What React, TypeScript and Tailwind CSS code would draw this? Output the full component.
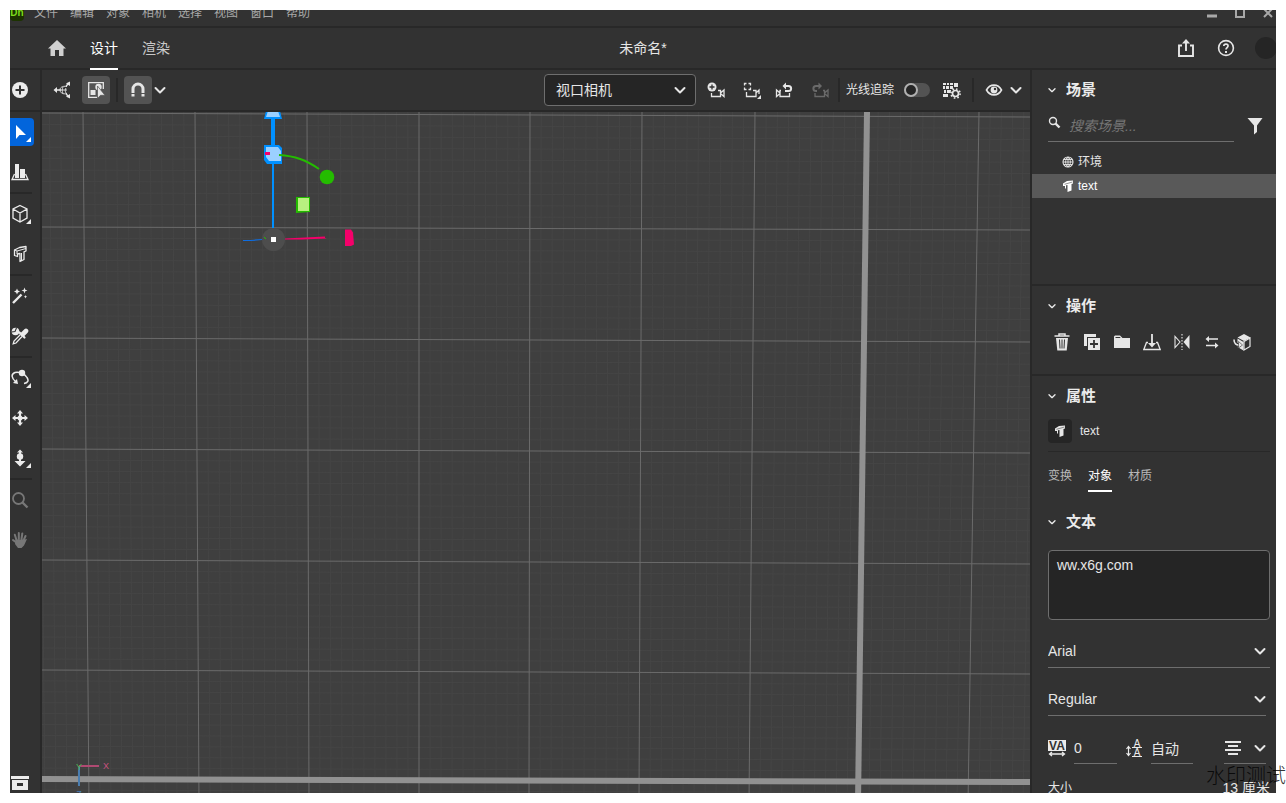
import { useState } from "react";
import type { ReactNode } from "react";

const MENU = ["文件", "编辑", "对象", "相机", "选择", "视图", "窗口", "帮助"];

type IconProps = { size?: number; className?: string; children: ReactNode };

function Icon({ size = 18, className = "", children }: IconProps) {
  return (
    <svg
      width={size}
      height={size}
      viewBox={`0 0 ${size} ${size}`}
      fill="none"
      stroke="currentColor"
      strokeWidth="1.3"
      className={`shrink-0 ${className}`}
      aria-hidden="true"
    >
      {children}
    </svg>
  );
}

function Chevron({ size = 12, className = "" }: { size?: number; className?: string }) {
  return (
    <svg width={size} height={size} viewBox="0 0 12 12" fill="none" stroke="currentColor" strokeWidth="2" strokeLinecap="round" strokeLinejoin="round" className={`shrink-0 ${className}`} aria-hidden="true">
      <path d="M1.5 4 6 8.5 10.5 4" />
    </svg>
  );
}

const icons = {
  add: (
    <Icon>
      <circle cx="9" cy="9" r="8" fill="currentColor" stroke="none" />
      <path d="M9 4.5v9M4.5 9h9" stroke="#323232" strokeWidth="2" />
    </Icon>
  ),
  cursor: (
    <Icon size={20}>
      <path d="M6 3v14l3.5-4H16z" fill="currentColor" stroke="none" />
    </Icon>
  ),
  align: (
    <Icon>
      <path d="M4 1h4v14H4zM9 6h5v9H9z" fill="currentColor" stroke="none" />
      <path d="M3.5 11 1 16.5h16L14.5 11" />
    </Icon>
  ),
  cube: (
    <Icon size={20}>
      <path d="m10 1.500 7 3.500v9l-7 4-7-4V5zM3 5l7 4 7-4M10 9v9" />
    </Icon>
  ),
  text3d: (
    <Icon>
      <path d="M3.500 5 8.500 2.500 15 1.500V6l-2 .8V14.500L9 16.500V8.500L6.500 9v2.500l-3-1z" strokeLinejoin="round" />
      <path d="m3.500 5 2.500 1L15 3.500M6 6v3M10.500 8v8" strokeWidth="1" />
    </Icon>
  ),
  wand: (
    <Icon>
      <path d="m2 16 8.500-8.500" strokeWidth="2.4" />
      <path d="m6 1.500.9 2.100 2.100.9-2.100.9L6 7.500l-.9-2.100L3 4.500l2.100-.9zM13.500.5l.8 2.200 2.200.8-2.200.8-.8 2.200-.8-2.200-2.200-.8 2.200-.8zM14.500 8l.5 1.200 1.200.5-1.200.5-.5 1.200-.5-1.200-1.200-.5 1.200-.5z" fill="currentColor" stroke="none" />
    </Icon>
  ),
  dropper: (
    <Icon>
      <circle cx="4.500" cy="4.500" r="3.800" fill="currentColor" stroke="none" />
      <path d="M.5 5 4 4.500 5.500 1" stroke="#323232" strokeWidth="1.100" />
      <path d="m9.500 7.500-6.500 6.500-.8 2.800L5 16l6-6.500" />
      <path d="m8.500 5.500 5 5" strokeWidth="2.200" strokeLinecap="round" />
      <path d="m12 7 3-3" strokeWidth="4.600" strokeLinecap="round" />
    </Icon>
  ),
  orbit: (
    <Icon>
      <path d="M5 13C0 9 0 5 4 3.500c4-1 10 1.500 12 5 2 3 1 5.500-3 6" strokeWidth="1.500" />
      <path d="m2 14 5 1-1-5z" fill="currentColor" stroke="none" />
      <circle cx="11" cy="4" r="3.200" fill="currentColor" stroke="none" />
    </Icon>
  ),
  pan: (
    <Icon>
      <path d="M9 3v12M3 9h12" strokeWidth="2.200" />
      <circle cx="9" cy="9" r="2.500" fill="currentColor" stroke="none" />
      <path d="m9 1 3 3.500H6zM9 17l3-3.500H6zM1 9l3.500-3v6zM17 9l-3.500-3v6z" fill="currentColor" stroke="none" />
    </Icon>
  ),
  dolly: (
    <Icon>
      <path d="M9 3v10" strokeWidth="2" />
      <circle cx="9" cy="7.500" r="3.200" fill="currentColor" stroke="none" />
      <path d="m9 .5 3 3H6zM3.500 12h11L9 17.500z" fill="currentColor" stroke="none" />
    </Icon>
  ),
  zoom: (
    <Icon>
      <circle cx="7.500" cy="7.500" r="5.500" strokeWidth="1.800" />
      <path d="m11.500 11.500 5 5" strokeWidth="2.400" />
    </Icon>
  ),
  hand: (
    <Icon>
      <path d="M5.500 9 3.800 3.800M7.800 8V2M10.500 8l.8-5.500M12.500 9.500 14.500 5M6 12 2 9" strokeWidth="2" strokeLinecap="round" />
      <path d="M4.500 8.500h9l2.500-.5-3 6.500-2.500 2.500H7l-3-4z" fill="currentColor" stroke="none" />
    </Icon>
  ),
  archive: (
    <Icon>
      <path d="M0 2h18v3H0zM1 6h16v10H1z" fill="currentColor" stroke="none" />
      <path d="M6 9h6v3H6z" fill="#323232" stroke="none" />
    </Icon>
  ),
  home: (
    <Icon>
      <path d="M9 1 0 9.500h2.500V17H7v-6h4v6h4.500V9.500H18z" fill="currentColor" stroke="none" />
    </Icon>
  ),
  share: (
    <Icon>
      <path d="M5 6.500H2V17h14V6.500h-3" strokeWidth="1.900" />
      <path d="M9 12V3" strokeWidth="1.900" />
      <path d="m9 0 4 4.500H5z" fill="currentColor" stroke="none" />
    </Icon>
  ),
  help: (
    <Icon>
      <circle cx="9" cy="9" r="7.400" strokeWidth="1.600" />
      <path d="M6.800 7C7 4.200 11.500 4.600 11 7.200 10.700 8.600 9 8.700 9 10.500" strokeWidth="1.700" />
      <path d="M8 12h2v2H8z" fill="currentColor" stroke="none" />
    </Icon>
  ),
  explode: (
    <Icon>
      <path d="M2 9h6M13 5.500l2.500-3.500M13 12.500l2.500 3.500" strokeWidth="1.300" />
      <path d="m.5 9 3.500-3v6zM17 .5v4.500L13 2.500zM17 17.500V13l-4 2.500z" fill="currentColor" stroke="none" />
      <path d="M14 5.500C9 4.500 6.500 7 7 9.500s3 4 7 3M10 6c-1 2-1 4 0 6.500M13 7c-1 1.500-1 3 0 5M7.500 9H14" strokeWidth=".9" />
    </Icon>
  ),
  pick: (
    <Icon>
      <path d="M16.300 8V1.700H1.700v14.600H10" strokeWidth="1.300" />
      <circle cx="11.500" cy="6" r="3.200" fill="currentColor" stroke="none" />
      <path d="M3.500 9h5v5h-5z" fill="currentColor" stroke="none" />
      <path d="M10.500 5v12.500l3-3.200H18z" fill="currentColor" stroke="#535353" strokeWidth=".7" />
    </Icon>
  ),
  magnet: (
    <Icon>
      <path d="M4 12V8a5 5 0 0 1 10 0v4" strokeWidth="3" />
      <path d="M2.500 13h3v2.500h-3zM12.500 13h3v2.500h-3z" fill="currentColor" stroke="none" />
    </Icon>
  ),
  cameraAdd: (
    <Icon>
      <circle cx="5" cy="6" r="4.500" fill="currentColor" stroke="none" />
      <path d="M5 3.500v5M2.500 6h5" stroke="#323232" />
      <path d="M4.500 12v3.500h9v-6H11M13.500 12 17 9v6.500l-3.500-3" />
    </Icon>
  ),
  cameraFrame: (
    <Icon>
      <path d="M1.500 4.500v-2h2M5.500 2.500h2v2M1.500 6.500v2h2M7.500 6.500v2h-2" />
      <path d="M3.500 11v4.500H13v-6h-3M13 12l3-3v4" />
      <path d="M18 14v4h-4z" fill="currentColor" stroke="none" />
    </Icon>
  ),
  cameraUndo: (
    <Icon>
      <path d="M6 9.500H5v6h9.500v-3.500M5 12 1.500 9v6.500L5 12.500" />
      <path d="M10 5h3.500c3.500 0 3.500 5 0 5H10" strokeWidth="2" />
      <path d="M7.500 5 11 1.500v7z" fill="currentColor" stroke="none" />
    </Icon>
  ),
  cameraRedo: (
    <Icon>
      <path d="M4 12v3.500h9.500v-6H12M13.500 12 17 9v6.500l-3.500-3" />
      <path d="M8 5H5c-3.500 0-3.500 5 0 5h1" strokeWidth="2" />
      <path d="M11 5 7.500 1.500v7z" fill="currentColor" stroke="none" />
    </Icon>
  ),
  renderSettings: (
    <Icon>
      <path d="M0 2h3v2H0zM4 2h2v2H4zM7 2h3v2H7zM11 2h4v4h-4zM0 5h2v3H0zM3 5h3v3H3zM7 5h3v3H7zM1 9h2v3H1zM4 9h4v3H4zM0 13h5v3H0z" fill="currentColor" stroke="none" />
      <circle cx="12.500" cy="12.500" r="5.200" fill="#323232" stroke="none" />
      <circle cx="12.500" cy="12.500" r="3" strokeWidth="1.700" />
      <circle cx="12.500" cy="12.500" r="4.600" strokeWidth="1.600" strokeDasharray="1.600 2.010" />
    </Icon>
  ),
  eye: (
    <Icon>
      <path d="M1.500 9C5 2.500 13 2.500 16.500 9 13 15.500 5 15.500 1.500 9z" strokeWidth="1.600" />
      <circle cx="9" cy="9" r="3.400" fill="currentColor" stroke="none" />
      <circle cx="10" cy="8" r="1.200" fill="#323232" stroke="none" />
    </Icon>
  ),
  filter: (
    <Icon>
      <path d="M1.500 1h15L11 8.500V15l-3 2.500v-9z" fill="currentColor" stroke="none" />
    </Icon>
  ),
  globe: (
    <Icon size={12}>
      <circle cx="6" cy="6" r="5" strokeWidth="1.100" />
      <path d="M6 1v10M1 6h10M1.800 3.500h8.400M1.800 8.500h8.400M6 1C2.800 3 2.800 9 6 11c3.200-2 3.200-8 0-10" strokeWidth=".9" />
    </Icon>
  ),
  textSolid: (
    <Icon size={12}>
      <path d="M1 3.500 5 1l6-.5v3l-1.500.5v6.500L5.500 12V5L4 5.200V9L3 8V6L1 6z" fill="currentColor" stroke="none" />
      <path d="m2.500 4.300 3.500-1L10.500 2" stroke="#4a4a4a" strokeWidth=".6" />
    </Icon>
  ),
  trash: (
    <Icon>
      <path d="M6 2.500V1h6v1.500M1.500 3h15" strokeWidth="1.500" />
      <path d="M3 5h12l-1.300 12.500H4.300z" fill="currentColor" stroke="none" />
      <path d="m6.500 6.500.5 9M9 6.500v9M11.500 6.500l-.5 9" stroke="#323232" strokeWidth="1" />
    </Icon>
  ),
  duplicate: (
    <Icon>
      <path d="M1 1h12v3H4v9H1z" fill="currentColor" stroke="none" />
      <path d="M5 5h12v12H5z" fill="currentColor" stroke="none" />
      <path d="M11 7v8M7 11h8" stroke="#323232" strokeWidth="1.800" />
    </Icon>
  ),
  folder: (
    <Icon>
      <path d="M1 15V3.500L2 2.500h5L9.500 5H17v10z" fill="currentColor" stroke="none" />
      <path d="M2.500 4.500h4.800" stroke="#323232" strokeWidth="1" />
    </Icon>
  ),
  drop: (
    <Icon>
      <path d="M5 9.500H3.500L.8 16.500h16.400l-2.700-7H13" />
      <path d="M9 1v10" strokeWidth="1.800" />
      <path d="M5 10h8l-4 4.500z" fill="currentColor" stroke="none" />
    </Icon>
  ),
  mirror: (
    <Icon>
      <path d="M2 3.500v11L7 9z" strokeWidth="1.100" />
      <path d="M9 1v16" strokeWidth="1.100" strokeDasharray="1.500 1.500" />
      <path d="M16.500 2v14L10.500 9z" fill="currentColor" stroke="none" />
    </Icon>
  ),
  swap: (
    <Icon>
      <path d="M4 6h11M3 12.500h11" strokeWidth="1.700" />
      <path d="m2.500 6 3.500-3v6zM15.500 12.500l-3.500-3v6z" fill="currentColor" stroke="none" />
    </Icon>
  ),
  cubeTurn: (
    <Icon>
      <path d="M4.500 4.500 11 1l6.500 3.500L11 8zM4.500 5.500l6 3.500v8.500l-6-3.500z" fill="currentColor" stroke="none" />
      <path d="M11 17V8.500l6-3.500v8.500z" strokeWidth="1.200" />
      <path d="M1 6.500c0 4 2 6 6 5.500" stroke="#323232" strokeWidth="3.600" />
      <path d="M1 6.500c0 4 2 6 6 5.500" strokeWidth="1.600" />
      <path d="m5.500 8.500 4 3.500-4 3z" fill="currentColor" stroke="#323232" strokeWidth=".6" />
    </Icon>
  ),
};

/* Ground plane seen from above, each edge drifts a little with perspective */
const COLS = [
  [-29, -21], [83, 89], [195, 199], [307, 309], [419, 419], [530, 529], [642, 639], [755, 749], [867, 858], [979, 968], [1091, 1078],
];
const ROWS = [
  [2, 5], [113, 117], [227, 230], [338, 342], [449, 453], [560, 564], [670, 674], [779, 782], [889, 892],
];

function between(lines: number[][]) {
  return lines.slice(0, -1).flatMap((a, i) => {
    const b = lines[i + 1];
    return Array.from({ length: 9 }, (_, k) => {
      const t = (k + 1) / 10;
      return [a[0] + (b[0] - a[0]) * t, a[1] + (b[1] - a[1]) * t];
    });
  });
}

function Viewport() {
  return (
    <svg
      className="absolute inset-0 h-full w-full"
      viewBox="42 112 988 691"
      preserveAspectRatio="xMinYMin slice"
      role="img"
      aria-label="视口"
    >
      <g stroke="#454545" strokeWidth="1">
        {between(COLS).map(([a, b]) => <line key={`c${a}`} x1={a} y1={112} x2={b} y2={803} />)}
        {between(ROWS).map(([a, b]) => <line key={`r${a}`} x1={42} y1={a} x2={1030} y2={b} />)}
      </g>
      <g stroke="#6b6b6b" strokeWidth="1">
        {COLS.map(([a, b]) => <line key={a} x1={a} y1={112} x2={b} y2={803} />)}
        {ROWS.map(([a, b]) => <line key={a} x1={42} y1={a} x2={1030} y2={b} />)}
      </g>
      <g stroke="#919191">
        <line x1="867" y1="112" x2="858" y2="803" strokeWidth="6" />
        <line x1="42" y1="779" x2="1030" y2="782" strokeWidth="6" />
      </g>

      {/* transform gizmo */}
      <path d="M273 112v36" stroke="#0090ff" strokeWidth="4" />
      <path d="M273 162v66" stroke="#0090ff" strokeWidth="2" />
      <path d="M266 111h14l2 8h-18z" fill="#0090ff" />
      <path d="M268 111h10l2 6h-14z" fill="#9bd0ff" />
      <path d="M264 145h15l3 3v16h-15l-3-4z" fill="#0090ff" />
      <path d="M266 147h12l3 4v10h-12l-3-4z" fill="#9bd0ff" />
      <path d="M265 152h5v3h-5z" fill="#f5006a" />
      <path d="M279 155c16 1 27 5 40 14" stroke="#24bc00" strokeWidth="2" fill="none" />
      <circle cx="327" cy="177" r="7.300" fill="#24bc00" />
      <path d="M296 197h14v15l-14 1z" fill="#24bc00" />
      <path d="M298 198h11v13h-11z" fill="#b8f080" />
      <path d="M243 240.500h8l11-1" stroke="#0f6de0" strokeWidth="1.200" fill="none" />
      <path d="M285 238.500l40-2v1.500l2 .5-25 1h-17z" fill="#f5006a" />
      <circle cx="273.500" cy="239.500" r="11.500" fill="#4d4d4d" />
      <path d="m264 237 2 2" stroke="#24bc00" />
      <path d="M271 237h5v5h-5z" fill="#fff" />
      <path d="M345 229.500h6l2 3 1 12-3 1.500h-6z" fill="#f5006a" />

      {/* axis helper */}
      <path d="M79 766v20" stroke="#4a7db0" strokeWidth="2" />
      <path d="M79 766h20" stroke="#b04a72" strokeWidth="2" />
      <g fontFamily="Liberation Sans, sans-serif" fontSize="9" textAnchor="middle">
        <text x="79" y="770" fill="#4caf50">Y</text>
        <text x="106" y="769" fill="#c8507e">X</text>
        <text x="79" y="797" fill="#4a7db0">Z</text>
      </g>
    </svg>
  );
}

type ToolProps = { label: string; icon: ReactNode; flyout?: boolean; active?: boolean; dim?: boolean };

function Tool({ label, icon, flyout, active, dim }: ToolProps) {
  return (
    <div className="flex h-10 items-center justify-center">
      <button
        aria-label={label}
        aria-pressed={active}
        className={`relative flex size-7 items-center justify-center rounded ${active ? "bg-[#0265dc] text-white" : dim ? "text-[#777]" : "text-[#ebebeb]"}`}
      >
        {icon}
        {flyout && (
          <svg width="5" height="5" viewBox="0 0 5 5" className="absolute right-[3px] bottom-1" aria-hidden="true">
            <path d="M5 0v5H0z" fill="currentColor" />
          </svg>
        )}
      </button>
    </div>
  );
}

function Rule() {
  return <hr className="mr-2 border-t-2 border-[#282828]" />;
}

function BarButton({ label, children, className = "" }: { label: string; children: ReactNode; className?: string }) {
  return (
    <button aria-label={label} className={`flex h-7 w-6 items-center justify-center ${className}`}>
      {children}
    </button>
  );
}

function SectionTitle({ children }: { children: ReactNode }) {
  return (
    <h2>
      <button className="flex h-10 w-full items-center gap-2.5 px-4 text-[15px] font-bold text-[#ebebeb]">
        <Chevron size={8} />
        {children}
      </button>
    </h2>
  );
}

function FontSelect({ label, options, className = "", arrow = "right-0" }: { label: string; options: string[]; className?: string; arrow?: string }) {
  return (
    <div className={`relative border-b border-[#6e6e6e] ${className}`}>
      <select aria-label={label} className="h-8 w-full appearance-none bg-transparent text-sm outline-none">
        {options.map((o) => <option key={o}>{o}</option>)}
      </select>
      <Chevron className={`pointer-events-none absolute top-2.5 ${arrow}`} />
    </div>
  );
}

function ScenePanel() {
  return (
    <section className="h-[216px] border-b-2 border-[#282828]">
      <SectionTitle>场景</SectionTitle>
      <div className="flex h-8 pl-4">
        <label className="flex w-[186px] items-start gap-2 border-b border-[#6e6e6e]">
          <svg width="13" height="13" viewBox="0 0 13 13" fill="none" stroke="currentColor" className="mt-1.5 shrink-0" aria-hidden="true">
            <circle cx="5" cy="5" r="3.500" strokeWidth="1.400" />
            <path d="m7.500 7.500 4 4" strokeWidth="2.400" />
          </svg>
          <input
            type="search"
            aria-label="搜索场景"
            placeholder="搜索场景..."
            className="h-8 w-full min-w-0 bg-transparent text-sm italic outline-none placeholder:text-[#767676]"
          />
        </label>
        <button aria-label="筛选" className="ml-3 flex h-8 items-center">{icons.filter}</button>
      </div>
      <ul className="mt-2 text-xs">
        <li className="flex h-6 items-center gap-1 pl-[30px]">{icons.globe}环境</li>
        <li className="flex h-6 items-center gap-1 bg-[#595959] pl-[30px] text-white">{icons.textSolid}text</li>
      </ul>
    </section>
  );
}

const ACTIONS: [string, ReactNode][] = [
  ["删除", icons.trash],
  ["复制", icons.duplicate],
  ["编组", icons.folder],
  ["移至地面", icons.drop],
  ["镜像", icons.mirror],
  ["交换", icons.swap],
  ["转换", icons.cubeTurn],
];

function ActionsPanel() {
  return (
    <section className="h-[90px] border-b-2 border-[#282828]">
      <SectionTitle>操作</SectionTitle>
      <div className="flex h-8 pl-[15px]">
        {ACTIONS.map(([label, icon]) => (
          <button key={label} aria-label={label} className="flex w-[30px] items-center justify-center">
            {icon}
          </button>
        ))}
      </div>
    </section>
  );
}

function PropertiesPanel() {
  const [tab, setTab] = useState("对象");
  const [text, setText] = useState("ww.x6g.com");

  return (
    <section>
      <SectionTitle>属性</SectionTitle>
      <div className="mx-4 flex h-9 items-center gap-2 border-b border-[#282828] pb-1.5 text-xs">
        <span className="flex size-6 items-center justify-center rounded bg-[#252525]">{icons.textSolid}</span>
        text
      </div>
      <div role="tablist" className="flex h-10 items-stretch gap-4 px-4 text-xs">
        {["变换", "对象", "材质"].map((t) => (
          <button
            key={t}
            role="tab"
            aria-selected={t === tab}
            onClick={() => setTab(t)}
            className={`border-b-2 pt-2.5 ${t === tab ? "border-white text-white" : "border-transparent text-[#b8b8b8]"}`}
          >
            {t}
          </button>
        ))}
      </div>
      <div className="mt-2.5">
        <SectionTitle>文本</SectionTitle>
      </div>
      <div className="mx-4 mt-2">
        <textarea
          aria-label="文本"
          value={text}
          onChange={(e) => setText(e.target.value)}
          className="block h-[70px] w-full resize-none rounded border border-[#6e6e6e] bg-[#252525] px-2 py-1 text-sm outline-none"
        />
      </div>
      <FontSelect label="字体" options={["Arial"]} className="mx-4 mt-[15px]" arrow="right-1" />
      <FontSelect label="样式" options={["Regular"]} className="mr-5 ml-4 mt-[15px]" />
      <div className="mt-4 mr-5 ml-4 flex h-8 gap-2 text-sm">
        <label className="flex items-center gap-2">
          <svg width="18" height="18" viewBox="0 0 18 18" aria-hidden="true">
            <path d="M0 1h18v11H0z" fill="#ebebeb" />
            <text x="9" y="11" fontSize="12" fontWeight="bold" fontFamily="Liberation Sans, sans-serif" textAnchor="middle" fill="#323232">VA</text>
            <path d="M2 15h14M4 13l-2.500 2L4 17M14 13l2.500 2-2.500 2" fill="none" stroke="#ebebeb" strokeWidth="1.300" />
          </svg>
          <input aria-label="字距" defaultValue="0" className="h-8 w-[43px] border-b border-[#6e6e6e] bg-transparent outline-none" />
        </label>
        <label className="flex items-center gap-2">
          <svg width="18" height="18" viewBox="0 0 18 18" aria-hidden="true">
            <path d="M3.500 8v8M1.500 10l2-2.500 2 2.500M1.500 14l2 2.500 2-2.500M7 8.500h10M7 17.500h10" fill="none" stroke="#ebebeb" strokeWidth="1.200" />
            <g fontSize="10" fontFamily="Liberation Sans, sans-serif" textAnchor="middle" fill="#ebebeb">
              <text x="12" y="7.500">A</text>
              <text x="12" y="16.500">A</text>
            </g>
          </svg>
          <input aria-label="行距" defaultValue="自动" className="h-8 w-[42px] border-b border-[#6e6e6e] bg-transparent outline-none" />
        </label>
        <button aria-label="对齐" className="ml-auto flex w-[42px] items-center justify-between border-b border-[#6e6e6e]">
          <svg width="18" height="18" viewBox="0 0 18 18" stroke="currentColor" strokeWidth="2" aria-hidden="true">
            <path d="M1 3h16M4 7h10M1 11h16M4 15h10" />
          </svg>
          <Chevron />
        </button>
      </div>
      <label className="mx-4 mt-3 flex h-6 items-center justify-between text-xs">
        大小
        <input defaultValue="13 厘米" className="w-14 bg-transparent text-right text-sm outline-none" />
      </label>
    </section>
  );
}

function MenuBar() {
  return (
    <nav className="flex h-7 shrink-0 items-center border-b-2 border-[#282828] text-xs text-[#a8a8a8]">
      <span className="ml-2.5 flex h-4 w-3.5 items-center justify-center rounded-sm bg-[#1c3300] text-[10px] font-bold text-[#7ddb1c]">Dn</span>
      <ul className="ml-2.5 flex gap-3">
        {MENU.map((m) => <li key={m}><button>{m}</button></li>)}
      </ul>
      <div className="mr-3 ml-auto flex gap-4">
        <button aria-label="最小化"><Icon size={12}><path d="M1 9h10" strokeWidth="3" /></Icon></button>
        <button aria-label="最大化"><Icon size={12}><path d="M2 2h8v8H2z" strokeWidth="2" /></Icon></button>
        <button aria-label="关闭"><Icon size={12}><path d="m2 2 8 8M10 2l-8 8" strokeWidth="2" /></Icon></button>
      </div>
    </nav>
  );
}

function Header() {
  return (
    <header className="grid h-[42px] shrink-0 grid-cols-[1fr_auto_1fr] border-b-2 border-[#282828] text-sm">
      <div className="flex pl-12">
        <button aria-label="主页" className="mr-6 text-[#d0d0d0]">{icons.home}</button>
        <button className="-mb-0.5 border-b-2 border-white text-white">设计</button>
        <button className="ml-6 text-[#c8c8c8]">渲染</button>
      </div>
      <h1 className="self-center">未命名*</h1>
      <div className="flex items-center justify-end">
        <button aria-label="共享" className="flex w-10 justify-center">{icons.share}</button>
        <button aria-label="帮助" className="flex w-10 justify-center">{icons.help}</button>
        <button aria-label="帐户" className="flex w-10 justify-center">
          <span className="size-[22px] rounded-full bg-[#252525]" />
        </button>
      </div>
    </header>
  );
}

function ViewBar() {
  const [rays, setRays] = useState(false);

  return (
    <div className="flex h-[42px] shrink-0 items-center border-b-2 border-[#282828] px-2">
      <BarButton label="分解">{icons.explode}</BarButton>
      <button aria-label="选择编组" className="ml-2 flex size-7 items-center justify-center rounded bg-[#535353]">{icons.pick}</button>
      <span className="mx-1.5 h-6 w-0.5 bg-[#282828]" />
      <button aria-label="对齐磁铁" className="flex size-7 items-center justify-center rounded bg-[#535353]">{icons.magnet}</button>
      <button aria-label="对齐选项" className="ml-0.5"><Chevron /></button>

      <div className="relative ml-auto">
        <select aria-label="相机" className="block h-8 w-[152px] appearance-none rounded border border-[#6e6e6e] bg-[#252525] px-[11px] text-sm outline-none">
          <option>视口相机</option>
        </select>
        <Chevron className="pointer-events-none absolute top-2.5 right-2.5" />
      </div>
      <BarButton label="添加相机" className="ml-2">{icons.cameraAdd}</BarButton>
      <BarButton label="构图" className="ml-3">{icons.cameraFrame}</BarButton>
      <BarButton label="相机撤消" className="ml-2">{icons.cameraUndo}</BarButton>
      <BarButton label="相机重做" className="ml-3 text-[#6a6a6a]">{icons.cameraRedo}</BarButton>
      <span className="mx-1.5 h-6 w-0.5 bg-[#282828]" />
      <label className="flex items-center gap-2.5 text-xs">
        光线追踪
        <input type="checkbox" role="switch" checked={rays} onChange={() => setRays(!rays)} className="sr-only" />
        <span className="flex h-3.5 w-[26px] rounded-full bg-[#535353]">
          <span className={`size-3.5 rounded-full border-2 border-[#b0b0b0] bg-[#252525] ${rays ? "ml-auto" : ""}`} />
        </span>
      </label>
      <BarButton label="渲染设置" className="ml-2.5">{icons.renderSettings}</BarButton>
      <span className="mx-2 h-6 w-0.5 bg-[#282828]" />
      <BarButton label="显示">{icons.eye}</BarButton>
      <button aria-label="显示选项" className="ml-1"><Chevron /></button>
    </div>
  );
}

function ToolBar() {
  return (
    <aside className="flex w-[42px] shrink-0 flex-col border-r-2 border-[#282828]">
      <div className="h-[42px] shrink-0 border-b-2 border-[#282828]">
        <Tool label="添加" icon={icons.add} />
      </div>
      <Tool label="选择" icon={icons.cursor} flyout active />
      <Tool label="对齐" icon={icons.align} />
      <Rule />
      <Tool label="形状" icon={icons.cube} flyout />
      <Tool label="文本" icon={icons.text3d} />
      <Rule />
      <Tool label="魔棒" icon={icons.wand} />
      <Tool label="取样器" icon={icons.dropper} />
      <Rule />
      <Tool label="环绕" icon={icons.orbit} flyout />
      <Tool label="平移" icon={icons.pan} />
      <Tool label="推拉" icon={icons.dolly} flyout />
      <Rule />
      <Tool label="缩放" icon={icons.zoom} dim />
      <Tool label="抓手" icon={icons.hand} dim />
      <div className="mt-auto">
        <Tool label="资源" icon={icons.archive} />
      </div>
    </aside>
  );
}

export default function App() {
  return (
    <div className="relative h-screen overflow-hidden bg-white p-2.5">
      <div className="h-full overflow-hidden">
        <div className="-m-2.5 flex h-screen flex-col bg-[#323232] font-['Liberation_Sans','Noto_Sans_CJK_SC',sans-serif] text-[#e6e6e6]">
          <MenuBar />
          <Header />
          <div className="flex min-h-0 flex-1">
            <ToolBar />
            <main className="flex min-w-0 flex-1 flex-col">
              <ViewBar />
              <div className="relative flex-1 overflow-hidden bg-[#3f3f3f]">
                <Viewport />
              </div>
            </main>
            <aside className="w-64 shrink-0 overflow-hidden border-l-2 border-[#282828]">
              <ScenePanel />
              <ActionsPanel />
              <PropertiesPanel />
            </aside>
          </div>
        </div>
      </div>
      <p className="pointer-events-none absolute right-0 bottom-4 font-['Noto_Sans_CJK_SC',sans-serif] text-xl leading-6 font-light text-black/80">
        水印测试
      </p>
    </div>
  );
}
